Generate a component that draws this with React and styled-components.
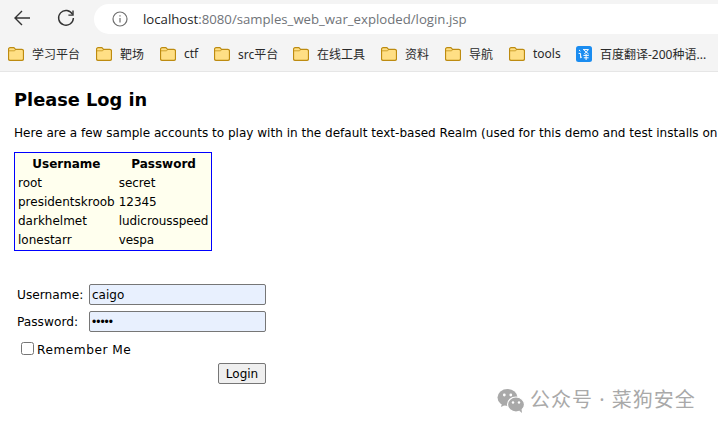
import React from "react";
import styled, { createGlobalStyle } from "styled-components";

const Global = createGlobalStyle`
  html, body { margin: 0; padding: 0; background: #fff; }
  body { width: 718px; height: 432px; overflow: hidden; font-family: "DejaVu Sans", Verdana, sans-serif; }
`;

const Page = styled.div`
  position: relative;
  width: 718px;
  height: 432px;
  overflow: hidden;
  display: flex;
  flex-direction: column;
`;

const Toolbar = styled.div`
  height: 38px;
  flex: none;
  background: #f4f4f4;
  display: flex;
  align-items: center;
  padding: 0 0 2px 12px;
  box-sizing: border-box;
`;

const NavButton = styled.div`
  width: 20px;
  height: 20px;
  margin-right: ${(p) => p.$gap}px;
  display: flex;
`;

const AddressBar = styled.div`
  flex: 1;
  height: 30px;
  margin-top: 1px;
  background: #fff;
  border-radius: 15px 0 0 15px;
  display: flex;
  align-items: center;
  padding-left: 18px;
  font-family: "Open Sans", "Noto Sans", sans-serif;
  font-size: 13.2px;
  color: #6f7378;
`;

const Host = styled.span`
  color: #1f1f1f;
`;

const InfoIcon = styled.div`
  width: 16px;
  height: 16px;
  margin-right: 15px;
  display: flex;
`;

const Bookmarks = styled.div`
  height: 34px;
  flex: none;
  background: #f4f4f4;
  border-bottom: 1px solid #e6e6e6;
  box-sizing: border-box;
  display: flex;
  align-items: center;
  padding: 0 0 2px 8px;
  font-family: "Noto Sans", "Noto Sans CJK SC", sans-serif;
  font-size: 12px;
  color: #2a2a2a;
  white-space: nowrap;
`;

const Bookmark = styled.div`
  display: flex;
  align-items: center;
  gap: 8px;
  width: ${(p) => p.$w}px;
  flex: none;
`;

const Content = styled.main`
  padding: 0 0 0 14px;
  font-size: 12.05px;
  color: #000;
  white-space: nowrap;
  overflow: hidden;
`;

const Title = styled.h2`
  margin: 17px 0 0;
  font-size: 17.8px;
  line-height: 21px;
  font-weight: bold;
`;

const Intro = styled.p`
  margin: 16px 0 0;
  line-height: 15px;
`;

const Accounts = styled.table`
  margin-top: 11px;
  background: #ffffee;
  border: 1px solid #0000ff;
  border-spacing: 2px;
  line-height: 15px;
  font-size: 12px;
  td, th { padding: 2px 1px 0; }
  td + td { letter-spacing: -0.07px; }
  th { font-weight: bold; text-align: center; }
`;

const LoginForm = styled.form`
  margin-top: 33px;
  margin-left: 3px;
  width: 249px;
  display: flex;
  flex-direction: column;
  font-size: 12.2px;
`;

const FieldRow = styled.div`
  display: flex;
  align-items: center;
  height: 21px;
  margin-bottom: 6px;
`;

const FieldLabel = styled.label`
  width: 72px;
  flex: none;
`;

const TextInput = styled.input`
  width: 177px;
  height: 21px;
  box-sizing: border-box;
  padding: 1px 2px;
  background: #e8f0fe;
  border: 1px solid #767676;
  border-radius: 2px;
  font-family: ${(p) => (p.type === "password" ? '"Liberation Sans", sans-serif' : '"DejaVu Sans", sans-serif')};
  font-size: 12px;
  color: #000;
  outline: none;
`;

const RememberRow = styled.label`
  display: flex;
  align-items: center;
  height: 16px;
  margin: 4px 0 0 4px;
  letter-spacing: 0.5px;
`;

const Check = styled.input`
  width: 13px;
  height: 13px;
  margin: -4px 3px 0 0;
`;

const ActionRow = styled.div`
  display: flex;
  justify-content: flex-end;
  margin-top: 5px;
`;

const LoginButton = styled.button`
  width: 48px;
  height: 21px;
  padding: 0;
  background: #efefef;
  border: 1px solid #767676;
  border-radius: 2px;
  font-family: "DejaVu Sans", sans-serif;
  font-size: 12px;
  color: #000;
`;

const Watermark = styled.div`
  position: absolute;
  left: 497px;
  top: 388px;
  display: flex;
  align-items: center;
  gap: 5px;
  font-family: "Noto Sans", "Noto Sans CJK SC", sans-serif;
  font-size: 20px;
  line-height: 28px;
  color: #a9a9a9;
  letter-spacing: 1px;
`;

const WatermarkText = styled.span`
  margin-top: -2px;
`;

const Folder = () => (
  <svg width="16" height="14" viewBox="0.5 1.5 15 13">
    <path d="M1 3.5C1 2.7 1.7 2 2.5 2H6l1.6 1.6h5.9c.8 0 1.5.7 1.5 1.5v7.4c0 .8-.7 1.5-1.5 1.5h-11C1.7 14 1 13.3 1 12.5z" fill="#ffdf85" stroke="#bd8b10" strokeWidth="1.1" />
    <path d="M1.3 5h5.4l1.2-1.2" fill="none" stroke="#bd8b10" strokeWidth="0.7" />
  </svg>
);

const Translate = () => (
  <svg width="16" height="16" viewBox="0 0 16 16">
    <rect width="16" height="16" rx="2.5" fill="#1a8cf0" />
    <path d="M3 4l1.4 1.2M2.6 7.4h2v4.4l1.4-1M7 3.6h5.5L8.4 8M8 4.2l4.6 3.8M7.4 9.4h5.4M10.1 8v6M7.8 11.8h4.8" fill="none" stroke="#fff" strokeWidth="1" />
  </svg>
);

const WeChat = () => (
  <svg width="28" height="26" viewBox="0 0 28 26">
    <ellipse cx="10.5" cy="9.5" rx="10" ry="8.5" fill="#a9a9a9" />
    <path d="M5 15l-1 4 5-2.5z" fill="#a9a9a9" />
    <ellipse cx="19" cy="16.5" rx="8.5" ry="7.5" stroke="#fff" strokeWidth="1.2" fill="#a9a9a9" />
    <path d="M22 22.5l3 2.5-.5-4z" fill="#a9a9a9" />
    <circle cx="7.3" cy="7" r="1.4" fill="#fff" />
    <circle cx="13.8" cy="7" r="1.4" fill="#fff" />
    <circle cx="16" cy="14.5" r="1.2" fill="#fff" />
    <circle cx="22" cy="14.5" r="1.2" fill="#fff" />
  </svg>
);

const bookmarks = [
  { label: "学习平台", w: 88 },
  { label: "靶场", w: 64 },
  { label: "ctf", w: 54 },
  { label: "src平台", w: 79 },
  { label: "在线工具", w: 88 },
  { label: "资料", w: 64 },
  { label: "导航", w: 64 },
  { label: "tools", w: 67 },
];

const accounts = [
  ["root", "secret"],
  ["presidentskroob", "12345"],
  ["darkhelmet", "ludicrousspeed"],
  ["lonestarr", "vespa"],
];

export default function App() {
  return (
    <Page>
      <Global />
      <Toolbar>
        <NavButton $gap={24}>
          <svg width="20" height="20" viewBox="0 0 20 20" fill="none" stroke="#333" strokeWidth="1.4">
            <path d="M18 10H3M10 3l-7 7 7 7" />
          </svg>
        </NavButton>
        <NavButton $gap={18}>
          <svg width="20" height="20" viewBox="0 0 20 20" fill="none" stroke="#333" strokeWidth="1.4">
            <path d="M16.6 6.5A7.4 7.4 0 1 0 17.4 10" />
            <path d="M17 2.5v4.6h-4.6" />
          </svg>
        </NavButton>
        <AddressBar>
          <InfoIcon>
            <svg width="16" height="16" viewBox="0 0 16 16" fill="none" stroke="#6f6f6f" strokeWidth="1.2">
              <circle cx="8" cy="8" r="7" />
              <path d="M8 7v4.5M8 4.2v1.4" />
            </svg>
          </InfoIcon>
          <span><Host>localhost</Host>:8080/samples_web_war_exploded/login.jsp</span>
        </AddressBar>
      </Toolbar>
      <Bookmarks>
        {bookmarks.map((b) => (
          <Bookmark key={b.label} $w={b.w}>
            <Folder />
            {b.label}
          </Bookmark>
        ))}
        <Bookmark $w={150}>
          <Translate />
          百度翻译-200种语...
        </Bookmark>
      </Bookmarks>
      <Content>
        <Title>Please Log in</Title>
        <Intro>Here are a few sample accounts to play with in the default text-based Realm (used for this demo and test installs on</Intro>
        <Accounts>
          <thead>
            <tr><th>Username</th><th>Password</th></tr>
          </thead>
          <tbody>
            {accounts.map(([u, p]) => (
              <tr key={u}><td>{u}</td><td>{p}</td></tr>
            ))}
          </tbody>
        </Accounts>
        <LoginForm onSubmit={(e) => e.preventDefault()}>
          <FieldRow>
            <FieldLabel>Username:</FieldLabel>
            <TextInput type="text" defaultValue="caigo" />
          </FieldRow>
          <FieldRow>
            <FieldLabel>Password:</FieldLabel>
            <TextInput type="password" defaultValue="caigo" />
          </FieldRow>
          <RememberRow>
            <Check type="checkbox" />
            Remember Me
          </RememberRow>
          <ActionRow>
            <LoginButton type="submit">Login</LoginButton>
          </ActionRow>
        </LoginForm>
      </Content>
      <Watermark>
        <WeChat />
        <WatermarkText>公众号 · 菜狗安全</WatermarkText>
      </Watermark>
    </Page>
  );
}
